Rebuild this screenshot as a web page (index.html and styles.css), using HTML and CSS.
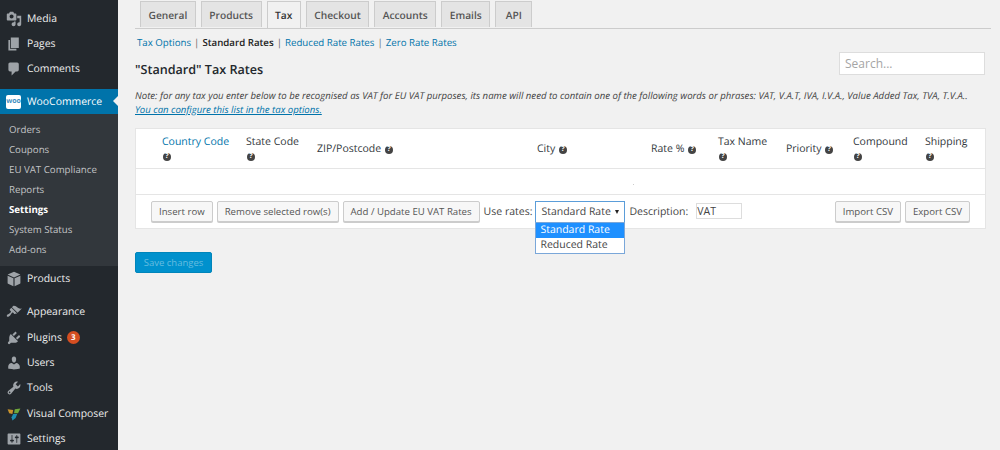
FILE: index.html
```html
<!DOCTYPE html>
<html lang="en">
<head>
<meta charset="utf-8">
<title>WooCommerce Tax Settings</title>
<link rel="stylesheet" href="styles.css">
</head>
<body>
<div class="app">
  <nav class="sidebar">
    <ul class="menu menu-top">
      <li class="item"><svg class="ico" viewBox="0 0 20 20"><path d="M13 11V4c0-.55-.45-1-1-1h-1.67L9 1H5L3.67 3H2c-.55 0-1 .45-1 1v7c0 .55.45 1 1 1h10c.55 0 1-.45 1-1zM7 4.5c1.38 0 2.5 1.12 2.5 2.5S8.38 9.5 7 9.5 4.5 8.38 4.5 7 5.62 4.5 7 4.5zM14 6h5v10.5c0 1.38-1.12 2.5-2.5 2.5S14 17.88 14 16.5s1.12-2.5 2.5-2.5c.17 0 .34.02.5.05V9h-3V6zm-4 8.05V13h2v3.5c0 1.38-1.12 2.5-2.5 2.5S7 17.88 7 16.5 8.12 14 9.5 14c.17 0 .34.02.5.05z"/></svg>Media</li>
      <li class="item"><svg class="ico" viewBox="0 0 20 20"><path d="M6 15V2h10v13H6zm-1 1h8v2H3V5h2v11z"/></svg>Pages</li>
      <li class="item"><svg class="ico" viewBox="0 0 20 20"><path d="M5 2h9c1.1 0 2 .9 2 2v7c0 1.1-.9 2-2 2h-2l-5 5v-5H5c-1.1 0-2-.9-2-2V4c0-1.1.9-2 2-2z"/></svg>Comments</li>
    </ul>
    <div class="current">
      <span class="woo-badge"><span class="woo-text">woo</span></span>WooCommerce
    </div>
    <ul class="submenu">
      <li>Orders</li>
      <li>Coupons</li>
      <li>EU VAT Compliance</li>
      <li>Reports</li>
      <li class="sub-active">Settings</li>
      <li>System Status</li>
      <li>Add-ons</li>
    </ul>
    <ul class="menu menu-products">
      <li class="item"><svg class="ico ico-lg" viewBox="0 0 20 20"><path d="M10 1l8 3.500-8 3.500-8-3.500zM2 6l7.300 3.200V19L2.600 15.800c-.4-.2-.6-.5-.6-.9zM18 6v8.900c0 .4-.2.7-.6.9L10.700 19V9.200z"/></svg>Products</li>
    </ul>
    <ul class="menu menu-bottom">
      <li class="item"><svg class="ico" viewBox="0 0 20 20"><path d="M14.480 11.060L7.410 3.990l1.500-1.500c.5-.56 2.300-.47 3.510.32 1.210.8 1.430 1.280 2.910 2.100 1.180.64 2.450 1.260 4.450.85zm-.71.71L6.700 4.700 4.930 6.470c-.39.39-.39 1.020 0 1.410l1.060 1.060c.39.39.39 1.030 0 1.420-.6.6-1.430 1.110-2.210 1.690-.35.26-.7.53-1.010.84C1.430 13.230.4 14.800 1.300 15.700c.9.9 2.470-.13 3.830-1.470.31-.31.58-.66.84-1.010.58-.78 1.090-1.610 1.690-2.210.39-.39 1.030-.39 1.420 0l1.060 1.060c.39.39 1.020.39 1.410 0z"/></svg>Appearance</li>
      <li class="item"><svg class="ico" viewBox="0 0 20 20"><path d="M13.110 4.360L9.870 7.600 8 5.730l3.240-3.240c.35-.34 1.050-.2 1.560.32.52.51.66 1.210.31 1.550zm-8 1.770l.91-1.120 9.010 9.010-1.190.84c-.71.71-2.630 1.160-3.820 1.160H6.140L4.900 17.260c-.59.59-1.540.59-2.120 0-.59-.58-.59-1.530 0-2.120l1.240-1.240v-3.880c0-1.130.4-3.190 1.090-3.890zm7.260 3.970l3.240-3.240c.34-.35 1.040-.21 1.550.31.52.51.66 1.210.31 1.550l-3.240 3.250z"/></svg>Plugins<span class="count">3</span></li>
      <li class="item"><svg class="ico" viewBox="0 0 20 20"><path d="M10 9.250c-2.270 0-2.730-3.440-2.730-3.440C7 4.020 7.820 2 9.970 2c2.160 0 2.980 2.020 2.710 3.810 0 0-.41 3.440-2.680 3.440zm0 2.570L12.720 10c2.390 0 4.520 2.330 4.520 4.530v2.490s-3.650 1.130-7.240 1.130c-3.650 0-7.240-1.130-7.240-1.130v-2.490c0-2.250 1.940-4.480 4.470-4.480z"/></svg>Users</li>
      <li class="item"><svg class="ico" viewBox="0 0 20 20"><path d="M16.680 9.770c-1.340 1.340-3.300 1.670-4.950.99l-5.410 6.520c-.99.99-2.590.99-3.580 0s-.99-2.590 0-3.570l6.520-5.420c-.68-1.650-.35-3.610.99-4.950 1.280-1.280 3.120-1.620 4.720-1.060l-2.890 2.890 2.820 2.820 2.860-2.870c.53 1.580.18 3.390-1.080 4.650zM3.810 16.210c.4.39 1.040.39 1.430 0 .4-.4.4-1.040 0-1.430-.39-.4-1.030-.4-1.430 0-.39.39-.39 1.030 0 1.430z"/></svg>Tools</li>
      <li class="item"><svg class="ico" viewBox="0 0 20 20"><path class="vc-o" d="M2 4l7 1-1 5-4-1z"/><path class="vc-g" d="M18 3l-7 1-1 5 5 0z"/><path class="vc-t" d="M9 10l5 0-2 5-4 3-1-4z"/></svg>Visual Composer</li>
      <li class="item"><svg class="ico" viewBox="0 0 20 20"><path d="M18 16V4c0-.55-.45-1-1-1H3c-.55 0-1 .45-1 1v12c0 .55.45 1 1 1h14c.55 0 1-.45 1-1zM8 11h1c.55 0 1 .45 1 1s-.45 1-1 1H8v1.500c0 .28-.22.5-.5.5s-.5-.22-.5-.5V13H6c-.55 0-1-.45-1-1s.45-1 1-1h1V5.500c0-.28.22-.5.5-.5s.5.22.5.5V11zm5-2h-1c-.55 0-1-.45-1-1s.45-1 1-1h1V5.500c0-.28.22-.5.5-.5s.5.22.5.5V7h1c.55 0 1 .45 1 1s-.45 1-1 1h-1v5.500c0 .28-.22.5-.5.5s-.5-.22-.5-.5V9z"/></svg>Settings</li>
    </ul>
  </nav>

  <main class="content">
    <div class="tabs">
      <a class="tab">General</a>
      <a class="tab">Products</a>
      <a class="tab tab-active">Tax</a>
      <a class="tab">Checkout</a>
      <a class="tab">Accounts</a>
      <a class="tab">Emails</a>
      <a class="tab tab-api">API</a>
    </div>
    <div class="subnav">
      <a class="link">Tax Options</a><span class="sep">|</span><strong class="sub-current">Standard Rates</strong><span class="sep">|</span><a class="link">Reduced Rate Rates</a><span class="sep">|</span><a class="link">Zero Rate Rates</a>
    </div>
    <div class="title-row">
      <h2 class="title">"Standard" Tax Rates</h2>
      <input class="search" type="text" placeholder="Search...">
    </div>
    <p class="note">Note: for any tax you enter below to be recognised as VAT for EU VAT purposes, its name will need to contain one of the following words or phrases: VAT, V.A.T, IVA, I.V.A., Value Added Tax, TVA, T.V.A..<br><a class="note-link">You can configure this list in the tax options.</a></p>

    <section class="card">
      <div class="thead">
        <div class="th th-link">Country Code <span class="help">?</span></div>
        <div class="th">State Code <span class="help">?</span></div>
        <div class="th">ZIP/Postcode <span class="help">?</span></div>
        <div class="th">City <span class="help">?</span></div>
        <div class="th">Rate % <span class="help">?</span></div>
        <div class="th">Tax Name <span class="help">?</span></div>
        <div class="th">Priority <span class="help">?</span></div>
        <div class="th">Compound <span class="help">?</span></div>
        <div class="th">Shipping <span class="help">?</span></div>
      </div>
      <div class="tbody"></div>
      <div class="tfoot">
        <button class="btn" type="button">Insert row</button>
        <button class="btn" type="button">Remove selected row(s)</button>
        <button class="btn" type="button">Add / Update EU VAT Rates</button>
        <span class="label label-use">Use rates:</span>
        <div class="select-wrap">
          <div class="select">Standard Rate<span class="caret"></span></div>
          <ul class="dropdown">
            <li class="opt opt-on">Standard Rate</li>
            <li class="opt">Reduced Rate</li>
          </ul>
        </div>
        <span class="label label-desc">Description:</span>
        <input class="desc" type="text" value="VAT">
        <div class="csv">
          <button class="btn" type="button">Import CSV</button>
          <button class="btn" type="button">Export CSV</button>
        </div>
      </div>
    </section>

    <button class="save" type="button">Save changes</button>
  </main>
</div>
</body>
</html>
```

FILE: styles.css
```css
* { box-sizing: border-box; }
html, body { margin: 0; padding: 0; height: 450px; overflow: hidden; }
body { background: #f1f1f1; color: #444; font-family: "Open Sans", sans-serif; font-size: 11px; text-rendering: geometricPrecision; }
ul { list-style: none; margin: 0; padding: 0; }
.app { display: flex; height: 450px; width: 1000px; }

/* Sidebar */
.sidebar { width: 118px; flex: none; height: 450px; background: #23282d; color: #eee; overflow: hidden; font-size: 10.400px; padding-top: 6px; }
.item { display: flex; align-items: center; height: 25.200px; padding-left: 6px; }
.ico { width: 16px; height: 16px; fill: #9ea3a8; margin-right: 5px; flex: none; }
.ico-lg { width: 16px; height: 16px; }
.menu-top { margin-bottom: 7.400px; }
.current { position: relative; height: 25px; padding: 1px 0 0 6px; background: #0073aa; color: #fff; display: flex; align-items: center; }
.current::after { content: ""; position: absolute; right: 0; top: 7px; border: 5px solid transparent; border-right-color: #f1f1f1; border-left-width: 0; }
.woo-badge { width: 15px; height: 14px; background: #fff; border-radius: 2px; margin-right: 6px; display: flex; align-items: center; justify-content: center; }
.woo-text { color: #3f8fc0; font-size: 7px; font-weight: 700; line-height: 1; }
.submenu { background: #32373c; padding: 6px 0 5px; height: 152px; color: #c2c4c6; font-size: 9.700px; }
.submenu li { height: 20px; line-height: 20px; padding-left: 9px; }
.submenu .sub-active { color: #fff; font-weight: 700; }
.menu-products { padding-top: 1px; }
.menu-products .item { height: 25px; }
.menu-bottom { margin-top: 7.500px; }
.menu-bottom .item { height: 25.400px; }
.count { display: inline-block; width: 13px; height: 13px; margin-left: 5px; border-radius: 50%; background: #d54e21; color: #fff; font-size: 8px; font-weight: 700; line-height: 13px; text-align: center; }
.vc-g { fill: #6fa83a; } .vc-t { fill: #1f8fb0; } .vc-o { fill: #c9922c; }

/* Main */
.content { flex: 1; padding: 1px 14px 0 17px; min-width: 0; }
.tabs { display: flex; gap: 5px; height: 27px; padding-left: 5px; border-bottom: 1px solid #ccc; width: 851px; box-sizing: content-box; }
.tab { height: 26px; padding: 0 7.500px; line-height: 27px; background: #e4e4e4; border: 1px solid #ccc; border-bottom: 0; color: #555; font-size: 10.200px; font-weight: 600; }
.tab-active { background: #f1f1f1; color: #333; height: 27px; margin-bottom: -1px; position: relative; }
.tab-api { padding: 0 9.500px; }
.subnav { display: flex; align-items: center; height: 16px; margin-top: 5px; padding-left: 2px; font-size: 9.700px; }
.link { color: #0073aa; }
.sep { color: #666; margin: 0 3px; }
.sub-current { color: #222; font-weight: 600; }
.title-row { display: flex; justify-content: space-between; height: 23px; margin-top: 2px; }
.title { margin: 9px 0 0; font-size: 12.600px; font-weight: 600; color: #23282d; line-height: 18px; }
.search { width: 146px; height: 23px; margin: 0 1px 0 0; border: 1px solid #ddd; background: #fff; padding: 0 5px; font: 12px "Open Sans", sans-serif; color: #444; outline: 0; }
.search::placeholder { color: #a5a5a5; opacity: 1; }
.note { margin: 14px 0 0; font-size: 9.600px; font-style: italic; line-height: 14px; color: #444; }
.note-link { color: #0073aa; text-decoration: underline; }

/* Card */
.card { background: #fff; border: 1px solid #e5e5e5; width: 851px; height: 101px; margin-top: 11px; position: relative; }
.thead { display: grid; grid-template-columns: 84px 71px 220px 114px 67px 68px 67px 72px 1fr; height: 40px; padding-left: 26px; border-bottom: 1px solid #e5e5e5; align-items: center; }
.th { font-size: 10.500px; line-height: 14px; color: #32373c; padding-right: 8px; }
.th-link { color: #0073aa; }
.help { display: inline-block; width: 8px; height: 8px; border-radius: 50%; background: #444; color: #fff; font-size: 7px; font-weight: 700; line-height: 8px; text-align: center; margin-left: 1px; vertical-align: 0.500px; }
.tbody { height: 26px; border-bottom: 1px solid #e5e5e5; position: relative; }
.tbody::after { content: ""; position: absolute; left: 497px; top: 15px; width: 1px; height: 1px; background: #ccc; }
.tfoot { display: flex; align-items: center; height: 32px; padding: 0 15px; }
.btn { height: 21px; padding: 0 7px; margin-right: 4px; background: #f7f7f7; border: 1px solid #ccc; border-radius: 2px; box-shadow: 0 1px 0 #ccc; color: #555; font: 9.650px "Open Sans", sans-serif; white-space: nowrap; }
.label { font-size: 10.500px; color: #444; margin-top: 1px; }
.label-use { margin-right: 3px; }
.select-wrap { position: relative; width: 90px; height: 22px; margin-top: 2px; }
.select { height: 22px; border: 1px solid #5b9dd9; background: #fff; padding-left: 5px; font-size: 10.500px; line-height: 21px; color: #444; position: relative; }
.caret { position: absolute; right: 5px; top: 8px; border: 2.500px solid transparent; border-top: 4px solid #222; border-bottom: 0; }
.dropdown { position: absolute; top: 21px; left: 0; width: 90px; border: 1px solid #7aa7d9; background: #fff; }
.opt { height: 15px; line-height: 15px; padding-left: 4px; font-size: 10.500px; color: #444; }
.opt-on { background: #1e90ff; color: #fff; }
.label-desc { margin-left: 4px; margin-right: 8px; }
.desc { width: 46px; height: 16px; margin: 0; border: 1px solid #ddd; padding: 0; font: 10.500px "Open Sans", sans-serif; color: #444; background: #fff; }
.csv { margin-left: auto; display: flex; }
.csv .btn:last-child { margin-right: 0; }

.save { display: block; width: 77px; height: 21px; margin-top: 23px; padding: 0; border: 1px solid #0085ba; border-radius: 2px; background: #0091cd; color: #66bde0; font: 9.500px "Open Sans", sans-serif; }
```
